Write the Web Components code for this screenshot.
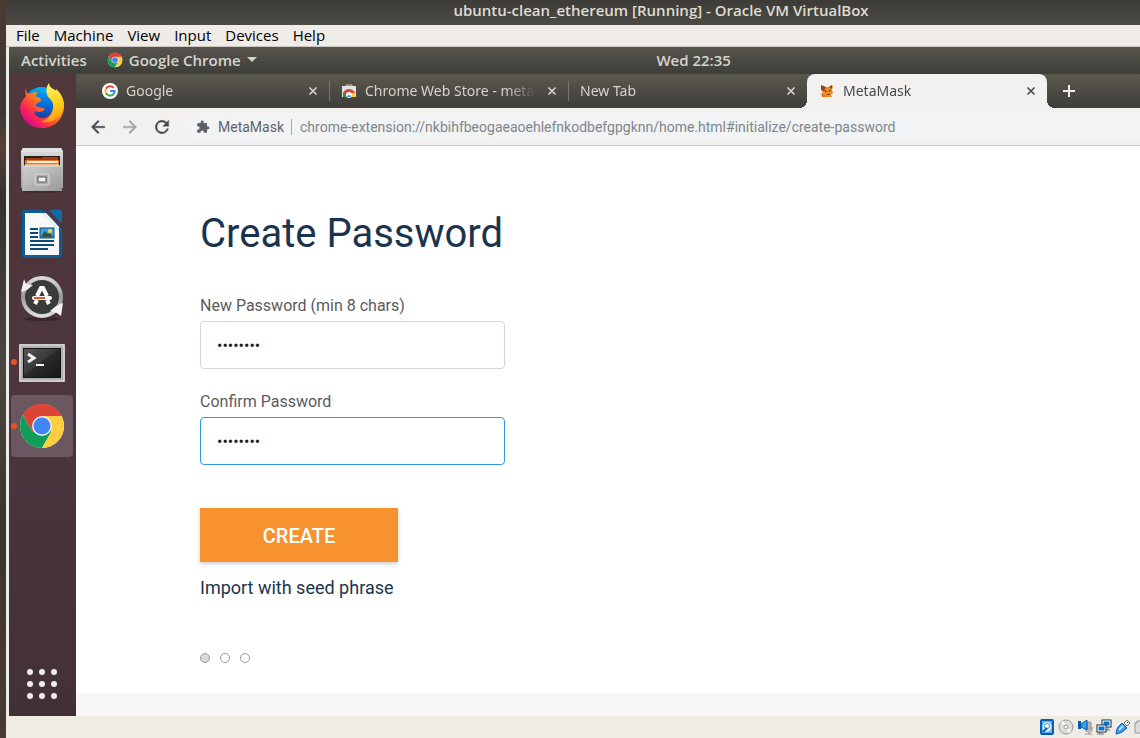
<!DOCTYPE html>
<html lang="en">
<head>
<meta charset="utf-8">
<title>ubuntu-clean_ethereum [Running] - Oracle VM VirtualBox</title>
<style>
  html, body { height: 100%; }
  body {
    margin: 0;
    overflow: hidden;
    font-family: "Noto Sans", "Open Sans", sans-serif;
    font-size: 14px;
  }
</style>
</head>
<body>
<vm-window heading="ubuntu-clean_ethereum [Running] - Oracle VM VirtualBox">
  <menu-strip slot="menu" items="File,Machine,View,Input,Devices,Help"></menu-strip>
  <top-panel app="Google Chrome" clock="Wed 22:35"></top-panel>
  <guest-desktop>
    <app-dock slot="dock">
      <dock-item icon="firefox" label="Firefox"></dock-item>
      <dock-item icon="files" label="Files"></dock-item>
      <dock-item icon="writer" label="LibreOffice Writer"></dock-item>
      <dock-item icon="updater" label="Software Updater"></dock-item>
      <dock-item icon="terminal" label="Terminal" running></dock-item>
      <dock-item icon="chrome" label="Google Chrome" running active></dock-item>
      <dock-item slot="end" icon="grid" label="Show Applications"></dock-item>
    </app-dock>
    <browser-tabs>
      <browser-tab icon="google">Google</browser-tab>
      <browser-tab icon="store" divided>Chrome Web Store - metamask</browser-tab>
      <browser-tab divided>New Tab</browser-tab>
      <browser-tab icon="fox" active>MetaMask</browser-tab>
    </browser-tabs>
    <address-bar site="MetaMask" url="chrome-extension://nkbihfbeogaeaoehlefnkodbefgpgknn/home.html#initialize/create-password"></address-bar>
    <create-password>
      <password-field label="New Password (min 8 chars)" value="password"></password-field>
      <password-field label="Confirm Password" value="password" active></password-field>
    </create-password>
  </guest-desktop>
  <status-tray slot="status"></status-tray>
</vm-window>

<script>
// icon name -> [viewBox size, markup]
const CHROME = `
  <circle cx="24" cy="24" r="22" fill="#fff"/>
  <path d="M24 24 5 13A22 22 0 0 1 43 13Z" fill="#db4437"/>
  <path d="M5 13A22 22 0 0 0 24 46L33.500 29.500 24 24 14.500 29.500Z" fill="#0f9d58"/>
  <path d="M43 13H24L33.500 29.500 24 46A22 22 0 0 0 43 13Z" fill="#ffcd40"/>
  <path d="M5 13 14.500 29.500 24 14H44A22 22 0 0 0 5 13Z" fill="#db4437"/>
  <circle cx="24" cy="24" r="10" fill="#f1f1f1"/>
  <circle cx="24" cy="24" r="8.500" fill="#4285f4"/>`;

const ICONS = {
  chrome: [48, CHROME],
  firefox: [48, `
    <defs>
      <linearGradient id="body" x1="1" y1="0" x2="0.100" y2="0.900"><stop offset="0" stop-color="#fff44f"/><stop offset=".25" stop-color="#ffb317"/><stop offset=".5" stop-color="#ff7a1a"/><stop offset=".75" stop-color="#ff2a4d"/><stop offset="1" stop-color="#d4009b"/></linearGradient>
      <linearGradient id="globe" x1=".6" y1="0" x2=".5" y2="1"><stop offset="0" stop-color="#00b5f5"/><stop offset=".5" stop-color="#0a65d8"/><stop offset="1" stop-color="#312a78"/></linearGradient>
      <linearGradient id="tail" x1=".3" y1="0" x2=".5" y2="1"><stop offset="0" stop-color="#fff36b"/><stop offset=".55" stop-color="#ffd21c"/><stop offset="1" stop-color="#ff9a13"/></linearGradient>
    </defs>
    <circle cx="24" cy="24" r="19" fill="url(#globe)"/>
    <path d="M8 6C7 9 7 11 8 14C4 18 2 23 2 27C3 38 12 46 24 46C37 46 46 36 46 24C46 16 42 10 38 7L36 23C35 32 30 37 23 36C18 35 15 31 17 29C21 31 25 30 27 27C25 25 21 26 18 24C17 22 21 20 23 19C23 16 21 15 18 15L19 10C15 10 12 12 10 12C8 10 8 8 8 6Z" fill="url(#body)"/>
    <path d="M31 1C28 5 27 11 31 16C36 20 36 25 34 30C32 36 27 39 23 40C35 42 46 34 46 22C45 14 41 10 37 8C33 6 31 4 31 1Z" fill="url(#tail)"/>`],
  files: [48, `
    <defs>
      <linearGradient id="top" x2="0" y2="1"><stop offset="0" stop-color="#dedede"/><stop offset="1" stop-color="#9b9b9b"/></linearGradient>
      <linearGradient id="front" x2="1" y2="1"><stop offset="0" stop-color="#d0d0d0"/><stop offset="1" stop-color="#999"/></linearGradient>
    </defs>
    <ellipse cx="24" cy="45" rx="18" ry="2" fill="#2a1d21" opacity=".5"/>
    <path d="M5 2H43L45 5V42H3V5Z" fill="url(#top)"/>
    <path d="M5 2H43L45 6H3Z" fill="#e2e2e2"/>
    <path d="M6 10H42V21H6Z" fill="#2b201d"/>
    <path d="M8 12H24L25 11H40V14H8Z" fill="#a23c13"/>
    <path d="M7 14H41V21H7Z" fill="#e2722e"/><path d="M9 15H40V17H9Z" fill="#fff1d8"/><path d="M7 18H41V20H7Z" fill="#f4b56f"/>
    <path d="M5 20H43L44 45H4Z" fill="url(#front)"/><path d="M5 20H43" stroke="#e4e4e4"/>
    <rect x="17" y="28" width="14" height="11" rx="2" fill="#b0b0b0" stroke="#dcdcdc" stroke-width="1"/>
    <rect x="20" y="31" width="8" height="5" fill="#f2f2f2" stroke="#5a5a5a"/>`],
  writer: [48, `
    <path d="M6 0H26L44 18V45Q44 48 41 48H7Q4 48 4 45V2Q4 0 6 0Z" fill="#0d5c92"/>
    <path d="M31 0H42Q44 0 44 2V12H42Z" fill="#0e6ba8"/>
    <path d="M7 3H25L41 20V45H7Z" fill="#f8f8f8"/>
    <path d="M25 3 41 20V17L28 3Z" fill="#fff"/>
    <path d="M12 19H20M12 23H20M12 27H20M12 31H36M12 35H36M12 39H30" stroke="#0b4b79" stroke-width="2"/>
    <rect x="22" y="18" width="14" height="10" fill="#3ba0db"/><circle cx="32" cy="21" r="2" fill="#fadb4a"/>
    <path d="M23 27 27 21 30 24 32 23 35 27Z" fill="#344f43"/><rect x="22" y="18" width="14" height="10" fill="none" stroke="#0b4b79"/>`],
  updater: [48, `
    <defs><linearGradient id="ring" x2="0" y2="1"><stop offset="0" stop-color="#d8d8d8"/><stop offset=".5" stop-color="#999"/><stop offset="1" stop-color="#ddd"/></linearGradient></defs>
    <ellipse cx="24" cy="45" rx="18" ry="2" fill="#211619" opacity=".45"/>
    <circle cx="24" cy="23" r="17" fill="#3a3a39"/>
    <circle cx="24" cy="23" r="19" fill="none" stroke="url(#ring)" stroke-width="4"/>
    <path d="M6 5 8 10 15 11 9 16 3 18Z" fill="#f2f2f2"/>
    <path d="M45 29 43 42 39 39 32 37 38 32Z" fill="#f2f2f2"/>
    <path d="M17 30 19 26M31 30 29 26M19 22 23 14H25L29 22" fill="none" stroke="#fff" stroke-width="4"/>
    <path d="M16 24H32" stroke="#fff" stroke-width="4" stroke-linecap="round"/><path d="M16 24H27" stroke="#e95420" stroke-width="2"/>`],
  terminal: [48, `
    <defs><linearGradient id="screen" x2="1" y2="1"><stop offset="0" stop-color="#555"/><stop offset=".45" stop-color="#3a3a3a"/><stop offset=".5" stop-color="#292929"/><stop offset="1" stop-color="#181818"/></linearGradient></defs>
    <rect x="1" y="6" width="46" height="38" rx="1" fill="#b0b0b0"/><rect x="2" y="7" width="44" height="36" fill="none" stroke="#e5e5e5"/>
    <rect x="5" y="10" width="38" height="30" fill="#151515"/><rect x="6" y="11" width="36" height="28" fill="url(#screen)"/>
    <path d="M10 16 16 20 10 24" fill="none" stroke="#f2f2f2" stroke-width="3"/><path d="M18 27H26" stroke="#f2f2f2" stroke-width="2"/>`],
  grid: [48, `<g fill="#eee"><circle cx="12" cy="12" r="3"/><circle cx="24" cy="12" r="3"/><circle cx="36" cy="12" r="3"/><circle cx="12" cy="24" r="3"/><circle cx="24" cy="24" r="3"/><circle cx="36" cy="24" r="3"/><circle cx="12" cy="36" r="3"/><circle cx="24" cy="36" r="3"/><circle cx="36" cy="36" r="3"/></g>`],
  google: [16, `
    <circle cx="8" cy="8" r="8" fill="#fff"/>
    <g fill="none" stroke-width="2"><path d="M11.500 4.800A4.700 4.700 0 0 0 4 5.700" stroke="#ea4335"/><path d="M4 5.700A4.700 4.700 0 0 0 4 10.300" stroke="#fbbc05"/><path d="M4 10.300A4.700 4.700 0 0 0 11.200 11.400" stroke="#34a853"/><path d="M11.200 11.400A4.700 4.700 0 0 0 12.700 8H8" stroke="#4285f4"/></g>`],
  store: [16, `
    <path d="M5 4V2H11V4" fill="none" stroke="#ccc"/>
    <path d="M1 3H15V14H1Z" fill="#e4e4e4"/><path d="M2 14V10Q4 6 8 6T14 10V14Z" fill="#db4437"/>
    <path d="M2 9 6 14H2Z" fill="#0f9d58"/><path d="M9 10H14V14H8Z" fill="#ffcd40"/>
    <circle cx="8" cy="12" r="3" fill="#fff"/><path d="M6 14A2 2 0 1 1 10 14Z" fill="#4285f4"/>`],
  fox: [16, `
    <path d="M2 2 6 4H10L13 2 14 3 13 7 14 10 12 12 13 14H3L2 11 4 9 2 7Z" fill="#f08a24"/>
    <path d="M2 2 7 4 6 6 5 8 2 7ZM13 2 10 4 13 6Z" fill="#8a4a20"/>
    <path d="M6 7 8 8 6 9ZM10 7H12L10 9Z" fill="#3b2a20"/><path d="M3 11 8 13 7 14H3Z" fill="#e2761b"/><path d="M8 11H11L10 12H9Z" fill="#47301f"/>`],
  back: [24, `<path d="M20 11H7.830L13.420 5.410 12 4 4 12 12 20 13.410 18.590 7.830 13H20Z" fill="currentColor" stroke="currentColor" stroke-width=".5"/>`],
  forward: [24, `<path d="M4 11H16.170L10.580 5.410 12 4 20 12 12 20 10.590 18.590 16.170 13H4Z" fill="currentColor" stroke="currentColor" stroke-width=".5"/>`],
  reload: [24, `<path d="M17.650 6.350A8 8 0 1 0 19.730 14H17.650A6 6 0 1 1 12 6C13.660 6 15.140 6.690 16.220 7.780L13 11H20V4Z" fill="currentColor" stroke="currentColor" stroke-width=".5"/>`],
  puzzle: [24, `<path d="M20.500 11H19V7A2 2 0 0 0 17 5H13V3.500A2.500 2.500 0 0 0 8 3.500V5H4A2 2 0 0 0 2 7V10.800H3.500A2.700 2.700 0 0 1 3.500 16.200H2V20A2 2 0 0 0 4 22H7.800V20.500A2.700 2.700 0 0 1 13.200 20.500V22H17A2 2 0 0 0 19 20V16H20.500A2.500 2.500 0 0 0 20.500 11Z" fill="currentColor"/>`],
  close: [16, `<path d="M4.500 4.500 11.500 11.500M11.500 4.500 4.500 11.500" stroke="currentColor" stroke-width="1.600"/>`],
  plus: [16, `<path d="M8 2V14M2 8H14" stroke="currentColor" stroke-width="2"/>`],
  disk: [16, `<rect x="2" y="1" width="12" height="14" rx="1" fill="#5db1f2" stroke="#075fb0" stroke-width="2"/><ellipse cx="8" cy="8" rx="4.500" ry="5" fill="#d9efff"/><circle cx="8" cy="7" r="2.500" fill="#fff" stroke="#3d94da"/><path d="M4 13 8 9" stroke="#0860ae" stroke-width="2"/>`],
  cd: [16, `<circle cx="8" cy="8" r="7" fill="#dedede" stroke="#999"/><path d="M8 8 3 4 5 2ZM8 8 13 12 11 14Z" fill="#fff"/><circle cx="8" cy="8" r="2" fill="#fff" stroke="#999"/>`],
  audio: [16, `<rect x="10" y="3" width="4" height="8" rx="1" fill="#ccc" stroke="#888"/><path d="M10 5H14M10 7H14M10 9H14M8 8V10Q8 13 12 13T15 10V8M12 13V15M8 15H15" fill="none" stroke="#999"/><path d="M1 2H4V10H1Z" fill="#075bad"/><path d="M4 5 10 1V11L4 8Z" fill="#3b9ceb" stroke="#075bad"/>`],
  network: [16, `<path d="M9 9V11M12 9V11M8 11H14M4 12V15M1 15H8" stroke="#777"/><rect x="6" y="1" width="9" height="7" fill="#0876d1" stroke="#222"/><rect x="7" y="2" width="7" height="5" fill="none" stroke="#fff"/><rect x="1" y="6" width="9" height="7" fill="#0876d1" stroke="#222"/><rect x="2" y="7" width="7" height="5" fill="none" stroke="#fff"/>`],
  usb: [16, `<path d="M9 4 12 1 15 4 12 7Z" fill="#eee" stroke="#777"/><path d="M12 3 13 4" stroke="#333"/><path d="M7 4 12 9 7 13Q3 15 1 15Q1 11 3 8Z" fill="#3b9ceb" stroke="#075bad"/><path d="M4 11 8 7" stroke="#b7e2ff" stroke-width="2"/>`],
  folder: [16, `<path d="M1 4H3V2H8V4H15V14H1Z" fill="#ddd" stroke="#999"/>`],
};

function render(el, html) {
  el.attachShadow({ mode: 'open' }).innerHTML = html;
}

class UiIcon extends HTMLElement {
  connectedCallback() {
    if (this.shadowRoot) return;
    const [size, markup] = ICONS[this.getAttribute('name')];
    render(this, `
      <style>
        :host { display: block; flex: none; width: 16px; height: 16px; }
        svg { display: block; width: 100%; height: 100%; }
      </style>
      <svg viewBox="0 0 ${size} ${size}" aria-hidden="true">${markup}</svg>
    `);
  }
}

class VmWindow extends HTMLElement {
  connectedCallback() {
    render(this, `
      <style>
        :host {
          display: flex;
          height: 100vh;
          padding-left: 6px;
          box-sizing: border-box;
          background: linear-gradient(#4b3b35, #3b3733 15%, #544139 20%, #34312e 27%, #4b4642 50%, #3d342f 70%, #473b35);
        }
        .frame { flex: 1; min-width: 0; display: flex; flex-direction: column; background: #efebe7; }
        header {
          height: 25px;
          padding-left: 176px;
          text-align: center;
          font: 600 15px/20px "Open Sans", sans-serif;
          color: #dfdbd2;
          background: linear-gradient(#3c3b37, #4c4b45);
        }
        main { flex: 1; min-height: 0; margin-left: 3px; display: flex; flex-direction: column; }
      </style>
      <div class="frame">
        <header>${this.getAttribute('heading')}</header>
        <slot name="menu"></slot>
        <main><slot></slot></main>
        <slot name="status"></slot>
      </div>
    `);
  }
}

class MenuStrip extends HTMLElement {
  connectedCallback() {
    const items = this.getAttribute('items').split(',');
    render(this, `
      <style>
        :host { display: block; background: #efebe7; border-bottom: 1px solid #cbc8c3; }
        nav { display: flex; gap: 14px; padding: 0 10px; }
        button { border: 0; padding: 0; background: none; font: 15px/21px "Open Sans", sans-serif; color: #000; }
      </style>
      <nav>${items.map(item => `<button>${item}</button>`).join('')}</nav>
    `);
  }
}

class TopPanel extends HTMLElement {
  connectedCallback() {
    render(this, `
      <style>
        :host {
          display: grid;
          grid-template-columns: 8fr auto 5fr;
          align-items: center;
          box-sizing: border-box;
          height: 27px;
          padding: 0 12px 2px;
          color: #d5d3cd;
          font: 600 15px/20px "Open Sans", sans-serif;
          background: linear-gradient(#56544c, #3e3d39);
        }
        div { display: flex; align-items: center; gap: 20px; }
        button { display: flex; align-items: center; gap: 6px; border: 0; padding: 0; background: none; color: inherit; font: inherit; }
        .arrow { border: 5px solid transparent; border-top-color: currentColor; border-bottom: 0; }
      </style>
      <div>
        <button>Activities</button>
        <button><ui-icon name="chrome"></ui-icon>${this.getAttribute('app')}<span class="arrow"></span></button>
      </div>
      <time>${this.getAttribute('clock')}</time>
    `);
  }
}

class GuestDesktop extends HTMLElement {
  connectedCallback() {
    render(this, `
      <style>
        :host { display: flex; flex: 1; min-height: 0; }
        section { flex: 1; min-width: 0; display: flex; flex-direction: column; }
      </style>
      <slot name="dock"></slot>
      <section><slot></slot></section>
    `);
  }
}

class AppDock extends HTMLElement {
  connectedCallback() {
    render(this, `
      <style>
        :host {
          display: flex;
          flex-direction: column;
          flex: none;
          width: 67px;
          box-sizing: border-box;
          padding: 1px 0;
          background: linear-gradient(#50373b, #4c343d 60%, #413136);
        }
        div { display: flex; flex-direction: column; gap: 2px; }
        .end { margin-top: auto; }
      </style>
      <div><slot></slot></div>
      <div class="end"><slot name="end"></slot></div>
    `);
  }
}

class DockItem extends HTMLElement {
  connectedCallback() {
    render(this, `
      <style>
        :host { display: block; padding: 0 2px; }
        button {
          display: flex;
          align-items: center;
          width: 62px;
          height: 62px;
          padding: 0;
          border: 0;
          border-radius: 4px;
          background: none;
        }
        :host([active]) button { background: #6a5760; }
        .dot { width: 6px; height: 6px; margin-right: 1px; border-radius: 50%; }
        :host([running]) .dot { background: #e95420; }
        ui-icon { width: 48px; height: 48px; }
      </style>
      <button aria-label="${this.getAttribute('label')}"><span class="dot"></span><ui-icon name="${this.getAttribute('icon')}"></ui-icon></button>
    `);
  }
}

class BrowserTabs extends HTMLElement {
  connectedCallback() {
    render(this, `
      <style>
        :host { display: flex; height: 34px; padding-left: 14px; color: #d6d3cb; background: linear-gradient(#5b584e, #3e3d39); }
        button { display: flex; align-items: center; padding: 0 14px; border: 0; background: none; color: #eee; }
      </style>
      <slot></slot>
      <button aria-label="New tab"><ui-icon name="plus"></ui-icon></button>
    `);
  }
}

class BrowserTab extends HTMLElement {
  connectedCallback() {
    const icon = this.getAttribute('icon');
    render(this, `
      <style>
        :host { display: flex; align-items: center; flex: 0 1 239px; min-width: 0; position: relative; }
        :host([active]) { flex-basis: 240px; color: #45494d; background: #f2f1f0; border-radius: 8px 8px 0 0; }
        /* flared feet of the selected tab */
        :host([active])::before, :host([active])::after {
          content: "";
          position: absolute;
          bottom: 0;
          width: 8px;
          height: 8px;
        }
        :host([active])::before { right: 100%; background: radial-gradient(circle at 0 0, transparent 8px, #f2f1f0 8px); }
        :host([active])::after { left: 100%; background: radial-gradient(circle at 100% 0, transparent 8px, #f2f1f0 8px); }
        .tab { flex: 1; min-width: 0; display: flex; align-items: center; gap: 8px; padding: 0 8px 0 12px; }
        :host([divided]) .tab { border-left: 1px solid #77746c; height: 20px; padding-left: 11px; }
        .label { flex: 1; min-width: 0; overflow: hidden; white-space: nowrap; line-height: 20px; mask-image: linear-gradient(to left, transparent, #000 30px); }
        button { border: 0; padding: 0; background: none; color: inherit; }
      </style>
      <div class="tab">
        ${icon ? `<ui-icon name="${icon}"></ui-icon>` : ''}
        <span class="label"><slot></slot></span>
        <button aria-label="Close tab"><ui-icon name="close"></ui-icon></button>
      </div>
    `);
  }
}

class AddressBar extends HTMLElement {
  connectedCallback() {
    render(this, `
      <style>
        :host { display: flex; align-items: center; gap: 12px; height: 37px; padding-left: 12px; background: #f2f1f0; border-bottom: 1px solid #cdcccb; }
        button { border: 0; padding: 0; background: none; color: #45494d; }
        button:disabled { color: #a5a5a5; }
        button ui-icon { width: 20px; height: 20px; }
        .field {
          flex: 1;
          min-width: 0;
          display: flex;
          align-items: center;
          gap: 8px;
          height: 28px;
          padding-left: 12px;
          border-radius: 14px 0 0 14px;
          background: #f1f3f4;
          color: #5f6368;
          font-family: Roboto, sans-serif;
        }
        .field ui-icon { width: 14px; height: 14px; }
        .site { padding-right: 7px; border-right: 1px solid #a8aaad; line-height: 16px; }
        input { flex: 1; min-width: 0; border: 0; padding: 0; background: none; font: inherit; color: #80868b; outline: 0; }
      </style>
      <button aria-label="Back"><ui-icon name="back"></ui-icon></button>
      <button aria-label="Forward" disabled><ui-icon name="forward"></ui-icon></button>
      <button aria-label="Reload"><ui-icon name="reload"></ui-icon></button>
      <div class="field">
        <ui-icon name="puzzle"></ui-icon>
        <span class="site">${this.getAttribute('site')}</span>
        <input type="text" aria-label="Address" value="${this.getAttribute('url')}">
      </div>
    `);
  }
}

class CreatePassword extends HTMLElement {
  connectedCallback() {
    render(this, `
      <style>
        :host {
          display: flex;
          flex-direction: column;
          flex: 1;
          min-height: 0;
          font-family: Roboto, sans-serif;
          color: #1b344d;
          background: #f7f7f7;
        }
        form { flex: 1; padding: 63px 124px 0; margin-bottom: 23px; background: #fff; }
        h1 { margin: 0 0 36px; font-size: 40px; font-weight: 400; line-height: 50px; }
        .fields { display: flex; flex-direction: column; gap: 22px; }
        button {
          display: block;
          width: 198px;
          height: 54px;
          margin: 43px 0 14px;
          border: 0;
          padding: 2px 0 0;
          background: #f7922f;
          color: #fff;
          font: 500 20px Roboto, sans-serif;
          box-shadow: 0 2px 4px rgba(0, 0, 0, 0.2);
        }
        a { display: block; font-size: 18px; line-height: 24px; color: inherit; text-decoration: none; }
        .steps { display: flex; gap: 10px; margin-top: 53px; }
        .steps span { width: 8px; height: 8px; border: 1px solid #9b9b9b; border-radius: 50%; }
        .steps .current { background: #d8d8d8; }
      </style>
      <form>
        <h1>Create Password</h1>
        <div class="fields"><slot></slot></div>
        <button type="button">CREATE</button>
        <a href="#import">Import with seed phrase</a>
        <div class="steps"><span class="current"></span><span></span><span></span></div>
      </form>
    `);
  }
}

class PasswordField extends HTMLElement {
  connectedCallback() {
    render(this, `
      <style>
        :host { display: block; }
        label { display: block; margin-bottom: 4px; font-size: 16px; line-height: 22px; color: #5b5b5b; }
        input {
          display: block;
          box-sizing: border-box;
          width: 305px;
          max-width: 100%;
          height: 48px;
          padding: 0 16px;
          border: 1px solid #d2d5dc;
          border-radius: 4px;
          background: #fff;
          color: #1f1f1f;
          font: 16px Roboto, sans-serif;
          outline: 0;
        }
        :host([active]) input { border-color: #2f9ae0; }
      </style>
      <label for="password">${this.getAttribute('label')}</label>
      <input id="password" type="password" value="${this.getAttribute('value')}">
    `);
  }
}

class StatusTray extends HTMLElement {
  connectedCallback() {
    const icons = ['disk', 'cd', 'audio', 'network', 'usb', 'folder'];
    render(this, `
      <style>
        :host { display: flex; justify-content: flex-end; align-items: center; gap: 3px; height: 22px; overflow: hidden; background: #efebe5; }
        /* only the left part of the last icon fits */
        .cut { width: 6px; overflow: hidden; }
      </style>
      ${icons.map(name => name === 'folder'
        ? `<div class="cut"><ui-icon name="${name}"></ui-icon></div>`
        : `<ui-icon name="${name}"></ui-icon>`).join('')}
    `);
  }
}

customElements.define('ui-icon', UiIcon);
customElements.define('vm-window', VmWindow);
customElements.define('menu-strip', MenuStrip);
customElements.define('top-panel', TopPanel);
customElements.define('guest-desktop', GuestDesktop);
customElements.define('app-dock', AppDock);
customElements.define('dock-item', DockItem);
customElements.define('browser-tabs', BrowserTabs);
customElements.define('browser-tab', BrowserTab);
customElements.define('address-bar', AddressBar);
customElements.define('create-password', CreatePassword);
customElements.define('password-field', PasswordField);
customElements.define('status-tray', StatusTray);
</script>
</body>
</html>
